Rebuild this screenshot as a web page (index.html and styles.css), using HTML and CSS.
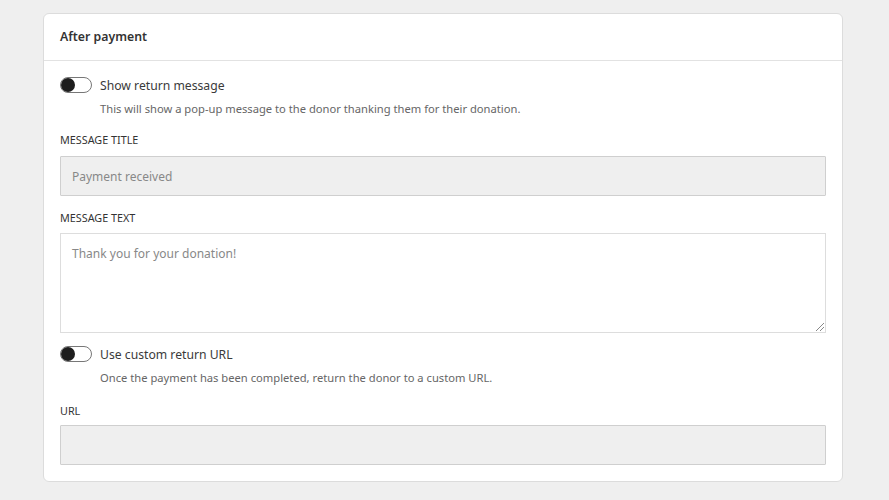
FILE: index.html
```html
<!DOCTYPE html>
<html>
<head>
<meta charset="utf-8">
<link rel="stylesheet" href="styles.css">
</head>
<body>
<div class="page">
  <section class="card">
    <header class="card-head">After payment</header>
    <div class="card-body">
      <div class="toggle-row">
        <span class="switch"><span class="knob"></span></span>
        <span class="toggle-label">Show return message</span>
      </div>
      <p class="help">This will show a pop-up message to the donor thanking them for their donation.</p>

      <label class="field-label">MESSAGE TITLE</label>
      <div class="input disabled">Payment received</div>

      <label class="field-label">MESSAGE TEXT</label>
      <div class="textarea">Thank you for your donation!<span class="grip"></span></div>

      <div class="toggle-row second">
        <span class="switch"><span class="knob"></span></span>
        <span class="toggle-label">Use custom return URL</span>
      </div>
      <p class="help">Once the payment has been completed, return the donor to a custom URL.</p>

      <label class="field-label url">URL</label>
      <div class="input disabled url-input"></div>
    </div>
  </section>
</div>
</body>
</html>
```

FILE: styles.css
```css
html, body {
  margin: 0;
  padding: 0;
  background: #efefef;
  font-family: "Noto Sans", "Open Sans", sans-serif;
  color: #333;
}
.page {
  padding: 13px 46px 0 43px;
}
.card {
  background: #fff;
  border: 1px solid #dcdcdc;
  border-radius: 6px;
  width: 800px;
  box-sizing: border-box;
}
.card-head {
  height: 47px;
  box-sizing: border-box;
  border-bottom: 1px solid #e2e2e2;
  padding: 0 16px 2px;
  display: flex;
  align-items: center;
  font-size: 12.3px;
  font-weight: 600;
  color: #333;
}
.card-body {
  padding: 15px 16px 16px 16px;
  display: flex;
  flex-direction: column;
}
.toggle-row {
  display: flex;
  align-items: center;
  height: 18px;
}
.switch {
  width: 32px;
  height: 16px;
  border: 1px solid #777;
  border-radius: 8px;
  position: relative;
  box-sizing: border-box;
  flex: none;
}
.knob {
  position: absolute;
  left: 0px;
  top: 0px;
  width: 14px;
  height: 14px;
  border-radius: 50%;
  background: #1e1e1e;
}
.toggle-label {
  margin-left: 8px;
  font-size: 12.2px;
  color: #3a3a3a;
}
.help {
  margin: 7px 0 1px 40px;
  font-size: 11.2px;
  color: #666;
  line-height: 16px;
}
.field-label {
  margin-top: 15px;
  font-size: 10.8px;
  color: #333;
  line-height: 14px;
}
.field-label.url {
  margin-top: 17px;
}
.input {
  margin-top: 9px;
  height: 40px;
  box-sizing: border-box;
  border: 1px solid #cfcfcf;
  border-radius: 1px;
  padding: 0 11px;
  display: flex;
  align-items: center;
  font-size: 12px;
  color: #888;
}
.input.url-input {
  margin-top: 7px;
}
.input.disabled {
  background: #efefef;
}
.textarea {
  margin-top: 8px;
  height: 100px;
  box-sizing: border-box;
  border: 1px solid #ddd;
  padding: 11px 11px;
  font-size: 12px;
  color: #888;
  position: relative;
  line-height: 18px;
}
.grip {
  position: absolute;
  right: 1px;
  bottom: 1px;
  width: 10px;
  height: 10px;
  background: repeating-linear-gradient(135deg, transparent 0 2px, #888 2px 3px);
  clip-path: polygon(100% 0, 100% 100%, 0 100%);
}
.toggle-row.second {
  margin-top: 12px;
}
```
